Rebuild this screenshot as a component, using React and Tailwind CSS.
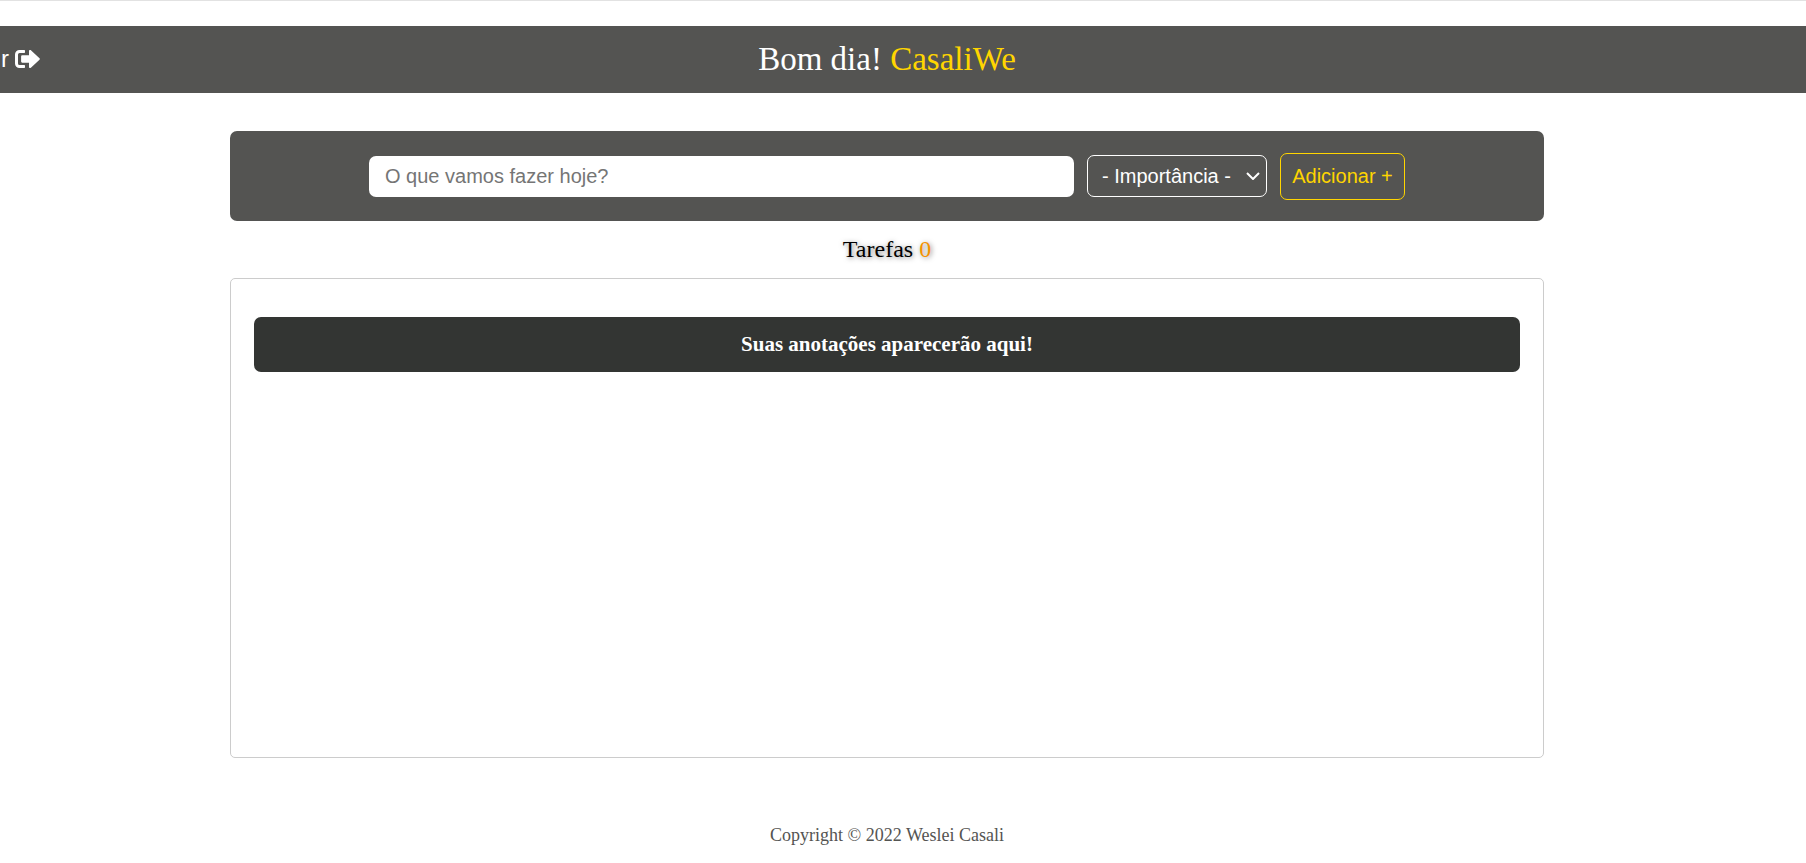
import { useState } from "react";

function ExitIcon() {
  return (
    <svg aria-hidden="true" viewBox="0 0 25 18" className="h-[18px] w-[25px] shrink-0 fill-current">
      <path d="M9.300 0H4.500A4.500 4.500 0 0 0 0 4.500v9A4.500 4.500 0 0 0 4.500 18h4.800a.7.7 0 0 0 .7-.7v-1.600a.7.7 0 0 0-.7-.7H4.500A1.500 1.500 0 0 1 3 13.500v-9A1.500 1.500 0 0 1 4.500 3h4.800a.7.7 0 0 0 .7-.7V.7a.7.7 0 0 0-.7-.7z" />
      <path d="M24.500 9.700l-8.600 8.100C15.200 18.400 14 18 14 17v-4.300H7.200A1.100 1.100 0 0 1 6.100 11.600V6.400A1.100 1.100 0 0 1 7.200 5.300H14V1c0-1 1.200-1.400 1.900-.8l8.600 8.100a1 1 0 0 1 0 1.400z" />
    </svg>
  );
}

function Header() {
  return (
    <header className="mt-[25px] flex h-[67px] items-center bg-[#545452] pr-8 pb-0.5 text-white">
      <a
        href="#sair"
        className="flex w-10 shrink-0 items-center justify-end gap-1.5 font-['Liberation_Sans',Arial,sans-serif] text-2xl leading-8"
      >
        <span>r</span>
        <ExitIcon />
      </a>
      <h1 className="flex-1 pr-10 text-center text-[33px] leading-9">
        Bom dia! <span className="text-[#ffd500]">CasaliWe</span>
      </h1>
    </header>
  );
}

function TaskForm() {
  const [task, setTask] = useState("");
  return (
    <form
      onSubmit={(e) => e.preventDefault()}
      className="flex h-[90px] items-center justify-center gap-[13px] rounded-[7px] bg-[#545452] px-[139px] font-['Liberation_Sans',Arial,sans-serif] text-xl"
    >
      <input
        aria-label="Tarefa"
        type="text"
        value={task}
        onChange={(e) => setTask(e.target.value)}
        placeholder="O que vamos fazer hoje?"
        className="h-[41px] min-w-0 flex-1 rounded-[7px] bg-white px-4 text-black placeholder:text-[#757575]"
      />
      <div className="grid w-[180px] shrink-0 items-center">
        <select
          aria-label="Importância"
          className="col-start-1 row-start-1 h-[42px] w-full appearance-none rounded-[7px] border border-white bg-transparent px-3.5 text-white"
        >
          <option>- Importância -</option>
        </select>
        <svg
          aria-hidden="true"
          viewBox="0 0 14 8"
          className="pointer-events-none col-start-1 row-start-1 mr-[7px] h-2 w-3.5 justify-self-end fill-none stroke-white stroke-2"
        >
          <path d="M1 1l6 6 6-6" />
        </svg>
      </div>
      <button
        type="submit"
        className="h-[47px] w-[125px] shrink-0 rounded-[7px] border border-[#ffd500] text-[#ffd500]"
      >
        Adicionar +
      </button>
    </form>
  );
}

export default function App() {
  return (
    <div className="min-h-screen overflow-x-hidden border-t border-[#e2e2e2] bg-white font-['Liberation_Serif','Times_New_Roman',serif]">
      <Header />
      <div className="pr-8">
        <main className="mx-auto mt-[38px] w-full max-w-[1314px]">
          <TaskForm />
          <h2 className="pt-3.5 pb-[15px] text-center text-2xl leading-7 text-black [text-shadow:1px_1px_5px_rgba(0,0,0,0.5)]">
            Tarefas <span className="text-[#f59300]">0</span>
          </h2>
          <section className="min-h-[480px] rounded-[5px] border border-[#cccccc] px-[23px] pt-[38px]">
            <p className="rounded-[7px] bg-[#333533] py-3.5 text-center text-[21px] leading-[27px] font-bold text-white">
              Suas anotações aparecerão aqui!
            </p>
          </section>
        </main>
        <footer className="mt-[67px] pb-4 text-center text-lg leading-5 text-[#545452]">
          Copyright © 2022 Weslei Casali
        </footer>
      </div>
    </div>
  );
}
